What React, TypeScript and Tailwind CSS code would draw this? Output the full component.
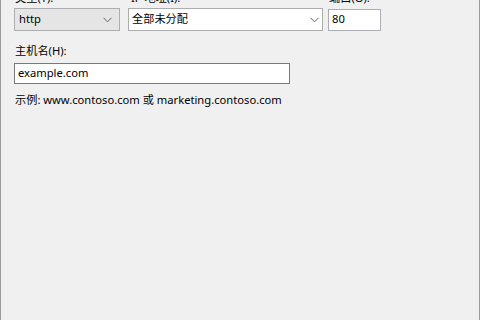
import React from "react";

const font = { fontFamily: '"Noto Sans", "Noto Sans CJK SC", sans-serif' };

const Chevron = () => (
  <svg width="9" height="6" viewBox="0 0 9 6" className="shrink-0">
    <path d="M0.5 0.8 L4.5 4.8 L8.5 0.8" fill="none" stroke="#606060" strokeWidth="1" />
  </svg>
);

export default function App() {
  return (
    <div
      className="w-[480px] h-[320px] bg-[#f0f0f0] border-l border-r border-[#9a9a9a] overflow-hidden text-[11.2px] text-black"
      style={font}
    >
      <div className="pl-[13px]">
        {/* top row: labels are partly cut off by the window edge */}
        <div className="flex -mt-[10px] h-[16px] leading-[16px]">
          <span className="w-[114px] pl-[1px]">类型(T):</span>
          <span className="w-[200px] pl-[3px]">IP 地址(I):</span>
          <span className="pl-[1px]">端口(O):</span>
        </div>
        <div className="flex items-center mt-[2px]">
          <div className="w-[106px] h-[23px] bg-[#e5e5e5] border border-[#adadad] flex items-center justify-between pl-[4px] pr-[7px]">
            <span>http</span>
            <Chevron />
          </div>
          <div className="ml-[8px] w-[195px] h-[23px] bg-white border border-[#adadad] flex items-center justify-between pl-[3px] pr-[3px]">
            <span>全部未分配</span>
            <Chevron />
          </div>
          <div className="ml-[5px] w-[53px] h-[22px] bg-white border border-[#abadb3] flex items-center pl-[3px]">
            <span>80</span>
          </div>
        </div>
        <div className="mt-[12px] leading-[16px] pl-[1px]">主机名(H):</div>
        <div className="mt-[4px] w-[276px] h-[21px] bg-white border border-[#7a7a7a] flex items-center pl-[3px]">
          <span>example.com</span>
        </div>
        <div className="mt-[8px] leading-[16px] pl-[1px]">
          示例: www.contoso.com 或 marketing.contoso.com
        </div>
      </div>
    </div>
  );
}
